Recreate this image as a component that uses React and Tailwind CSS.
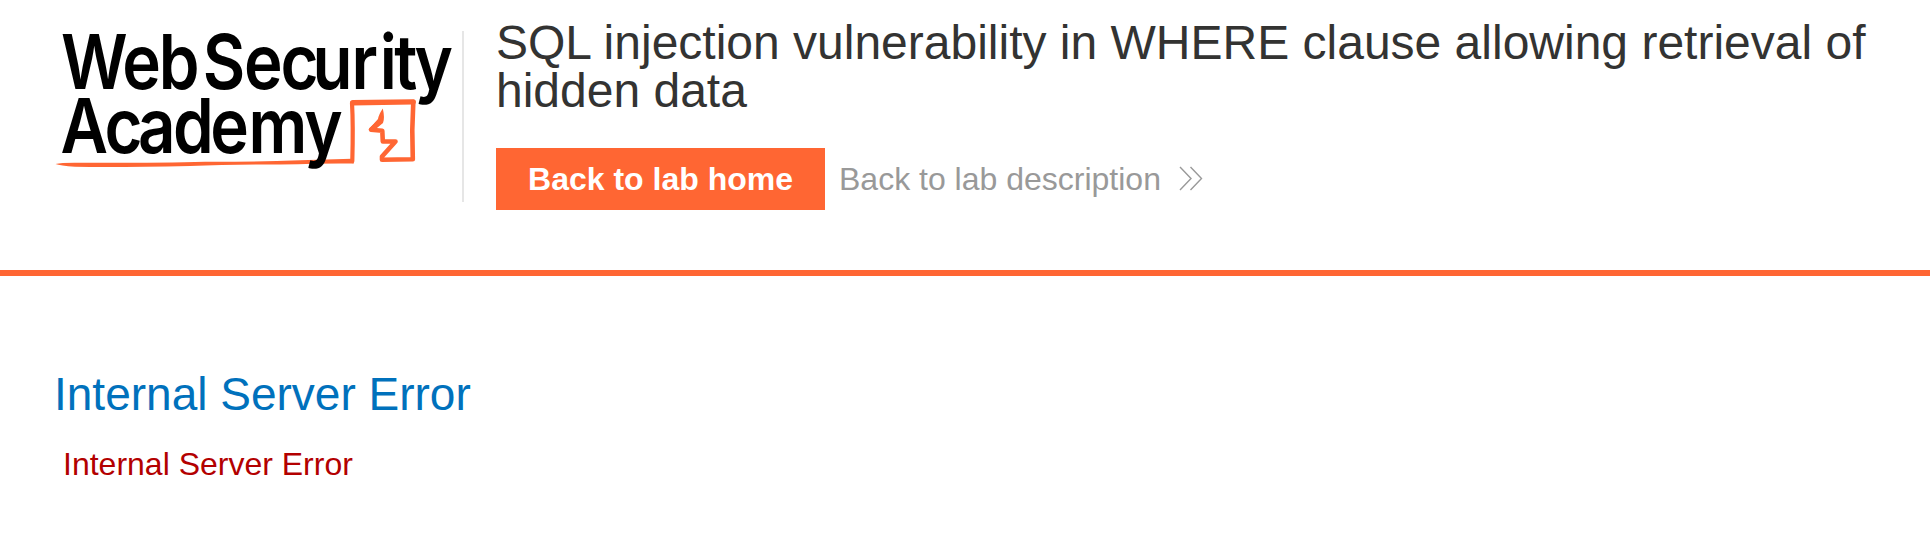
function AcademyLogo() {
  return (
    <svg className="block" width="397" height="140" viewBox="55 31 397 140" overflow="visible" role="img" aria-label="Web Security Academy">
      <g fill="none" stroke="#ff6633" strokeWidth="4.6" strokeLinecap="round" strokeLinejoin="round">
        <path d="M352.300 161.200Q353.300 125 352 103" strokeWidth="4.200" />
        <path d="M352.800 102.800L413.200 101.900" strokeWidth="5.400" />
        <path d="M380 121.500L371 129.800L382.300 130.800L382.800 141.500L395.500 141.500L382 156.500L382 159.800L412.800 159.200Q411.500 130 413.300 102" />
      </g>
      <path fill="#ff6633" d="M382.800 108.500Q378.500 115 378 119L369 129L372 132L383 123Q385 118 382.800 108.500Z" />
      <path fill="#ff6633" d="M55.500 164Q62 162.500 80 162.800Q160 163 205 161.800Q250 162 300 160.200L352 158.800L354 163.500Q330 163 280 164.500Q230 164 190 166Q120 167.500 75 166.800Q60 165.800 55.500 164Z" />
      <g fill="#000" fontFamily="Inter, sans-serif" fontWeight="600" fontSize="76" transform="scale(.86 1)">
        <text y="88.900" x="70.900 142.200 184.500">Web</text>
        <text y="88.900" x="235.700 283.700 326.200 363.500 408.800 441.600 458.400 482">Security</text>
        <text y="153.500" x="70.300 121.500 160.500 201.300 244.500 289 353.700">Academy</text>
      </g>
    </svg>
  );
}

export default function App() {
  return (
    <div className="h-[546px] w-full overflow-hidden bg-white font-['Liberation_Sans',Arial,sans-serif] text-[#333332]">
      <header className="flex h-[276px] border-b-[6px] border-[#ff6633] pl-[55px]">
        <div className="mt-[31px] h-[171px] w-[409px] shrink-0 border-r-2 border-[#e6e6e6]">
          <AcademyLogo />
        </div>
        <div className="ml-8 pt-[19px]">
          <h2 className="w-[1400px] text-[48px] leading-[48px]">
            SQL injection vulnerability in WHERE clause allowing retrieval of hidden data
          </h2>
          <div className="mt-[33px] flex h-[62px] items-center text-[32px] leading-[62px]">
            <a className="flex h-full w-[329px] items-center justify-center bg-[#ff6633] font-bold text-white">Back to lab home</a>
            <a className="ml-[14px] flex items-center text-[#999999]">
              Back to lab description
              <svg className="ml-[18px]" width="24" height="26" viewBox="0 0 24 26" fill="none" stroke="#999999" strokeWidth="1.400">
                <path d="M1 1L12 12.500L1 24M11.500 1L22.500 12.500L11.500 24" />
              </svg>
            </a>
          </div>
        </div>
      </header>
      <main className="pt-[92px] pl-[54px]">
        <h1 className="text-[46px] leading-[52px] text-[#0071bc]">Internal Server Error</h1>
        <p className="mt-[26px] pl-[9px] text-[32px] leading-[36px] text-[#b30000]">Internal Server Error</p>
      </main>
    </div>
  );
}
